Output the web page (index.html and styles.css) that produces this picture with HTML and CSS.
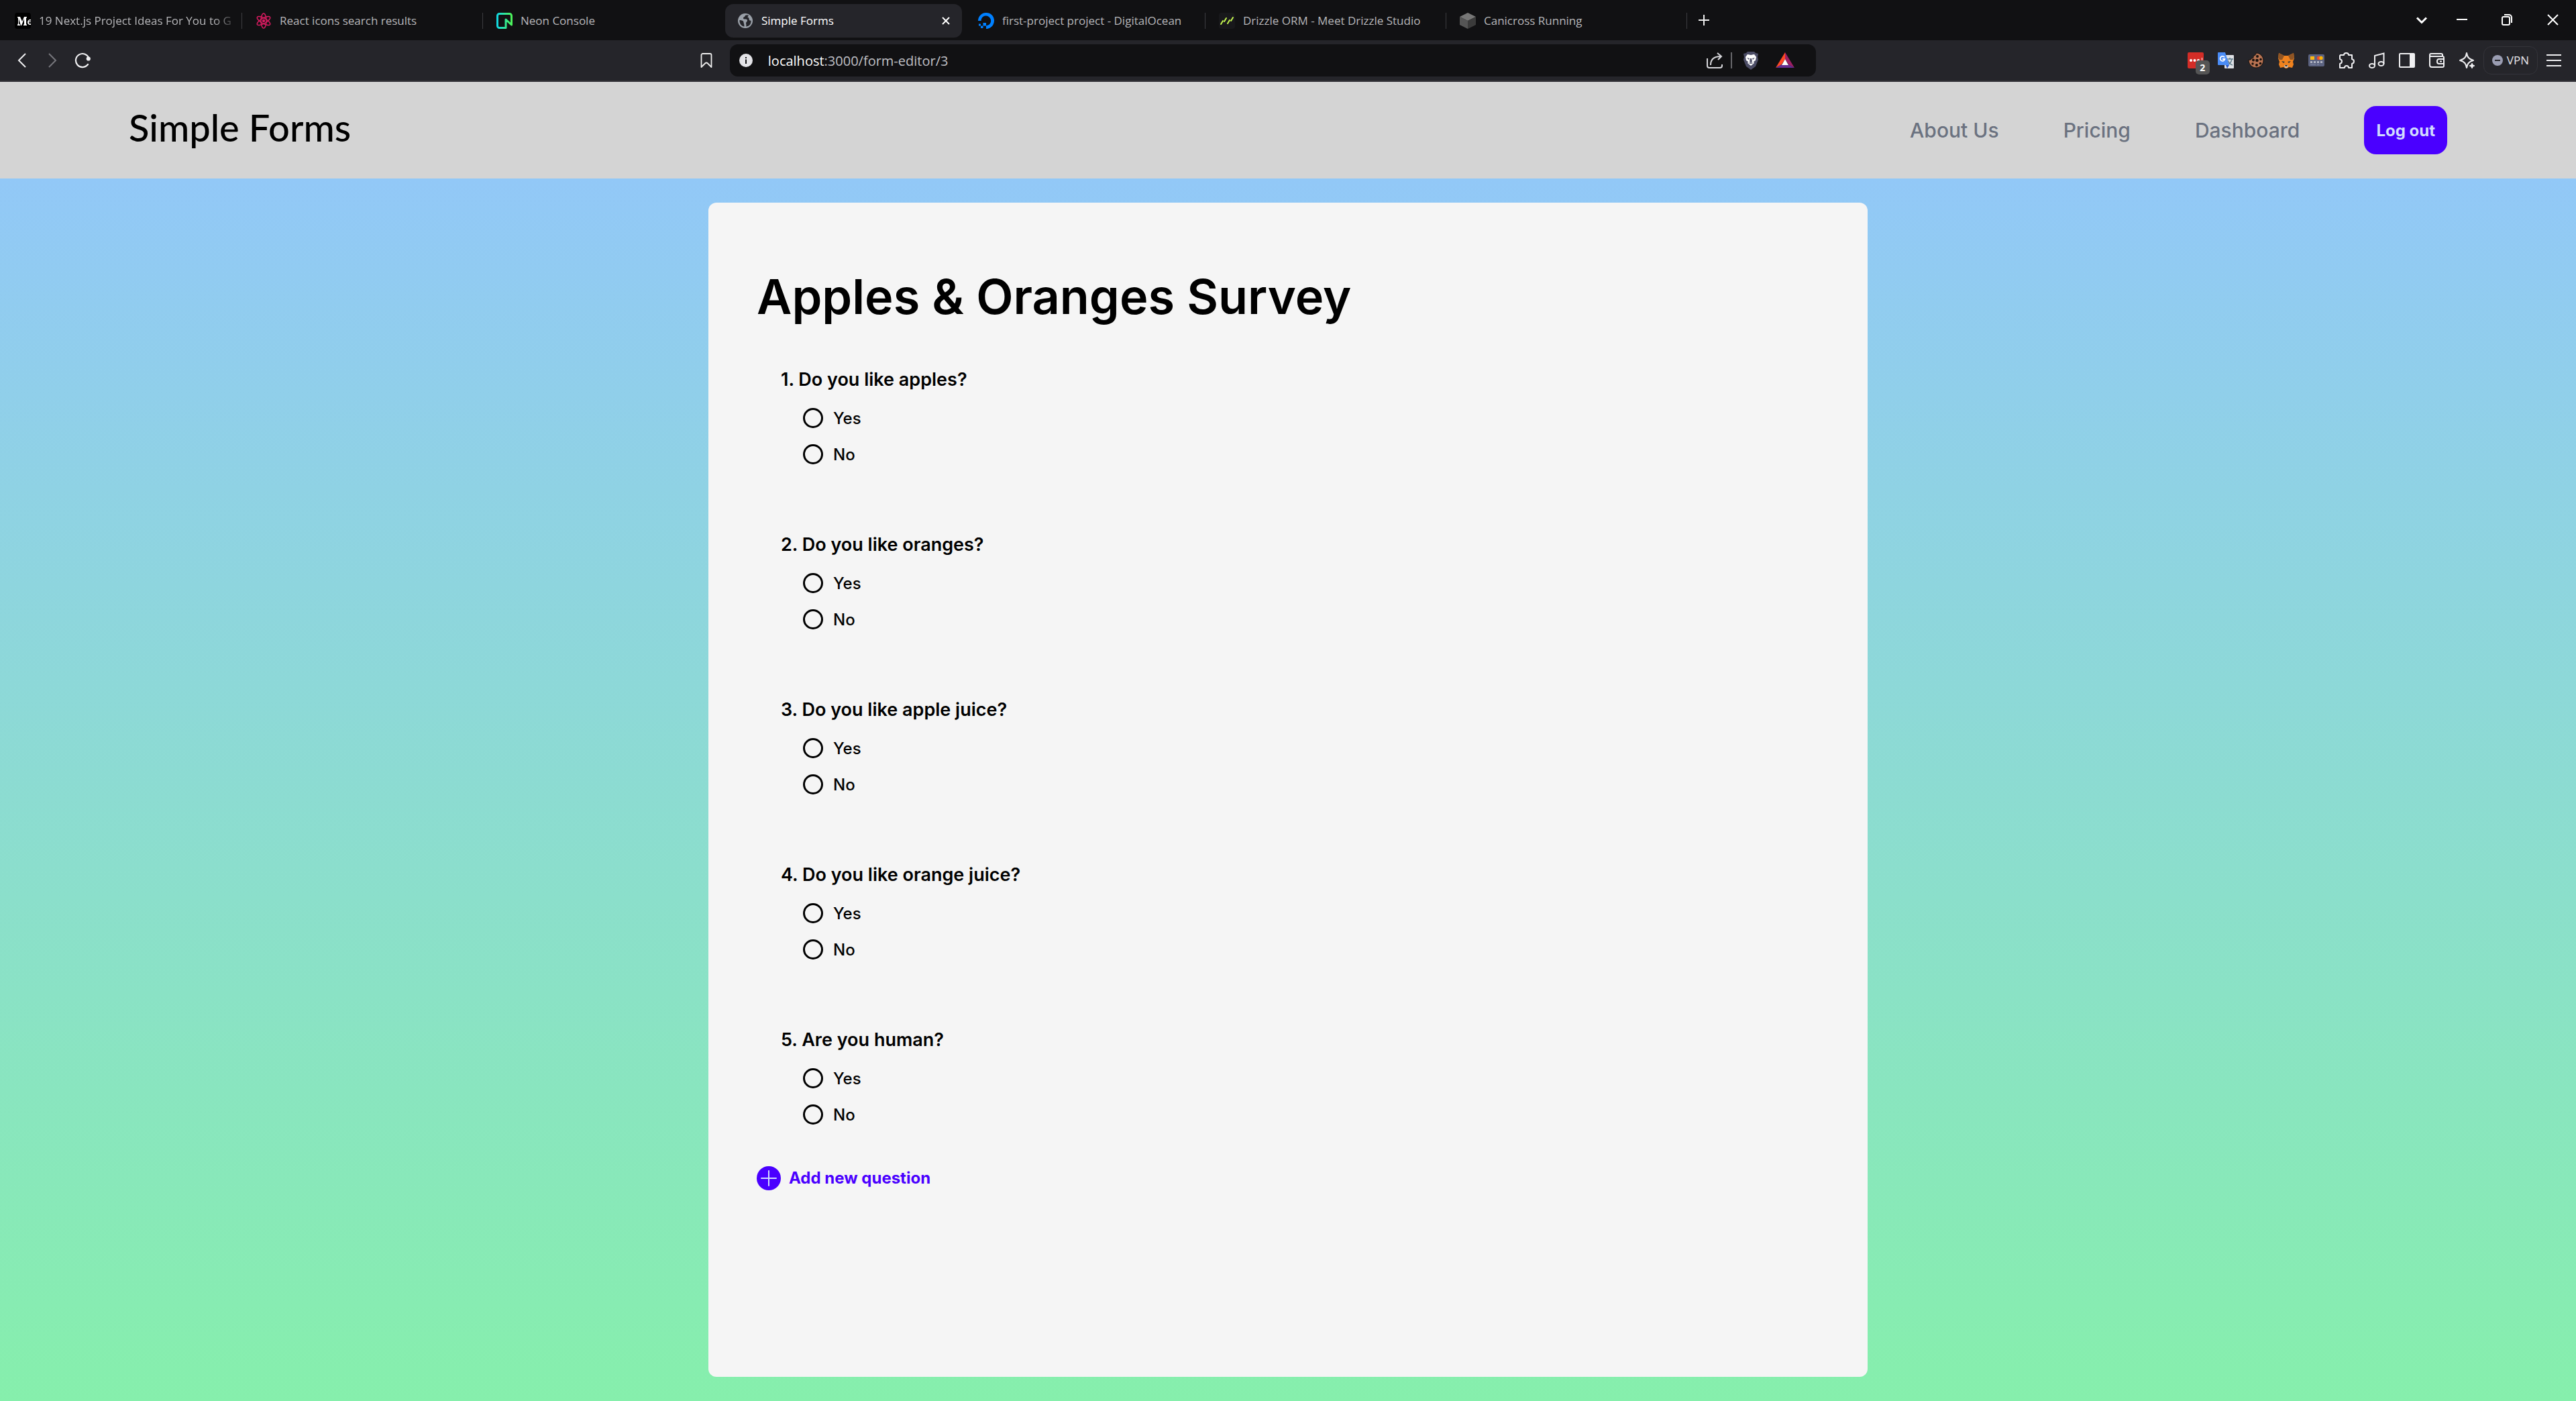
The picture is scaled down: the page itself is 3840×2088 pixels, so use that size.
FILE: index.html
```html
<!DOCTYPE html>
<html lang="en">
<head>
<meta charset="utf-8">
<meta name="viewport" content="width=device-width, initial-scale=1">
<title>Simple Forms</title>
<link rel="stylesheet" href="styles.css">
</head>
<body>
<div class="browser">
  <div class="tab-strip">
    <div class="tabs">
      <button class="tab tab-long">
        <svg class="icon" viewBox="0 0 24 24"><rect width="24" height="24" rx="4" fill="#000"/><path d="M4 6h4l3 7 3-7h4v1l-1 1v9l1 1v1h-5v-1l1-1V9l-4 10h-1L6 9v7l2 2v1H4v-1l1-2V8L4 7zM24 10c-6-1-7 9 0 8v-2c-2 1-3 0-3-2h3zm0 2v1h-3c0-1 2-2 3-1" fill="#fff"/></svg>
        <span class="tab-title">19 Next.js Project Ideas For You to G</span>
      </button>
      <button class="tab">
        <svg class="icon" viewBox="0 0 24 24" fill="none" stroke="#d81b60" stroke-width="1.500"><ellipse cx="12" cy="12" rx="4" ry="11"/><ellipse cx="12" cy="12" rx="4" ry="11" transform="rotate(60 12 12)"/><ellipse cx="12" cy="12" rx="4" ry="11" transform="rotate(120 12 12)"/><circle cx="12" cy="12" r="1.500" fill="#d81b60"/></svg>
        <span class="tab-title">React icons search results</span>
      </button>
      <button class="tab">
        <svg class="icon" viewBox="0 0 24 24" fill="none" stroke-width="3"><defs><linearGradient id="neon" x1="0" y1="0" x2="1" y2="0"><stop offset="0" stop-color="#12d8e0"/><stop offset="1" stop-color="#4df25a"/></linearGradient></defs><path d="M14 22.500H4.500a3 3 0 0 1-3-3v-15a3 3 0 0 1 3-3h15a3 3 0 0 1 3 3V18l-8.500-8z" stroke="url(#neon)" stroke-linejoin="round"/></svg>
        <span class="tab-title">Neon Console</span>
      </button>
      <button class="tab tab-active">
        <svg class="icon" viewBox="0 0 24 24"><circle cx="12" cy="12" r="11" fill="#9aa0a8"/><path d="M13 3.500c-2 1-1 2-3 3s-1 3 1 3 4 0 4 2-2 2-2 4 1 3 0 5c5 0 8-4 7.500-9-2 1-3-1-3-3s-2-1-2-2 2-2 1-3zM3.500 11c3 0 6 1 6 3s1 2 1 6.500C6 20 3 16 3.500 11z" fill="#25252a"/></svg>
        <span class="tab-title">Simple Forms</span>
        <svg class="close" viewBox="0 0 12 12" fill="none" stroke="#fff" stroke-width="2"><path d="M1 1l10 10M11 1L1 11"/></svg>
      </button>
      <button class="tab">
        <svg class="icon" viewBox="0 0 24 24" fill="#0080ff"><path d="M12 24v-4.700c5 0 8.500-5 6.600-10C16 3 7 3 5 9.300c-.3.800-.4 1.700-.4 2.700H0C0 4 7.500-2 16 .600 23 3 26 11 22.600 17.500 20.500 21.500 16.500 24 12 24z"/><path d="M7.500 15H12v4.500H7.500zM4 19.500h3.500V23H4zM1 16.500h3v3H1z"/></svg>
        <span class="tab-title">first-project project - DigitalOcean</span>
      </button>
      <button class="tab">
        <svg class="icon" viewBox="0 0 24 24" fill="none" stroke="#c5f74f" stroke-width="2" stroke-linecap="round"><rect width="24" height="24" rx="4" fill="#18181b" stroke="none"/><path d="M6 12l-3 5M11 8l-3 5M16 11l-3 5M21 7l-3 5"/></svg>
        <span class="tab-title">Drizzle ORM - Meet Drizzle Studio</span>
      </button>
      <button class="tab">
        <svg class="icon" viewBox="0 0 24 24"><path d="M12 0l12 6-12 6L0 6z" fill="#777"/><path d="M0 6l12 6v12L0 18z" fill="#555"/><path d="M24 6l-12 6v12l12-6z" fill="#3b3b3b"/></svg>
        <span class="tab-title">Canicross Running</span>
      </button>
    </div>
    <button class="icon-button" aria-label="New tab"><svg class="icon" viewBox="0 0 24 24" stroke="#eee" stroke-width="2"><path d="M12 3v16M4 11h16"/></svg></button>
    <div class="window-controls">
      <button class="icon-button search-tabs" aria-label="Search tabs"><svg class="icon" viewBox="0 0 24 24" fill="none" stroke="#fff" stroke-width="3"><path d="M5 7.500l7 7 7-7"/></svg></button>
      <button class="icon-button" aria-label="Minimize"><svg class="icon" viewBox="0 0 24 24" stroke="#fff" stroke-width="2"><path d="M4 10h16"/></svg></button>
      <button class="icon-button" aria-label="Restore"><svg class="icon" viewBox="0 0 24 24" fill="none" stroke="#fff" stroke-width="2"><rect x="4" y="6" width="11" height="12" rx="2"/><path d="M7 3h7a4 4 0 0 1 4 4v8"/></svg></button>
      <button class="icon-button" aria-label="Close"><svg class="icon" viewBox="0 0 24 24" stroke="#fff" stroke-width="2"><path d="M4 3l15 15M19 3L4 18"/></svg></button>
    </div>
  </div>
  <div class="toolbar">
    <div class="history">
      <button class="icon-button" aria-label="Back"><svg class="icon" viewBox="0 0 24 24" fill="none" stroke="#f0f0f2" stroke-width="2"><path d="M17 2L7 12l10 10"/></svg></button>
      <button class="icon-button" aria-label="Forward"><svg class="icon" viewBox="0 0 24 24" fill="none" stroke="#77777d" stroke-width="2"><path d="M7 2l10 10L7 22"/></svg></button>
      <button class="icon-button" aria-label="Reload"><svg class="icon" viewBox="0 0 24 24" fill="none" stroke="#f0f0f2" stroke-width="2.200" stroke-linecap="round"><path d="M20 18A10 10 0 1 1 21.500 9"/><circle cx="20.800" cy="9.500" r="2" fill="#f0f0f2"/></svg></button>
    </div>
    <div class="location">
      <button class="icon-button" aria-label="Bookmark"><svg class="icon" viewBox="0 0 24 24" fill="none" stroke="#eee" stroke-width="1.800"><path d="M4.500 22V4a2 2 0 0 1 2-2h11a2 2 0 0 1 2 2v18l-4-4-1.500-1.500q-2-2-4 0L8.500 18z" stroke-linejoin="round"/></svg></button>
      <div class="address-bar">
        <svg class="icon" viewBox="0 0 24 24"><circle cx="12" cy="12" r="10" fill="#e4e4e8"/><path d="M11 7h2v2h-2zM11 10.500h2V17h-2z" fill="#111113"/></svg>
        <a class="address" href="#survey"><span class="address-host">localhost</span>:3000/form-editor/3</a>
        <button class="icon-button" aria-label="Share"><svg class="icon" viewBox="0 0 24 24" fill="none" stroke="#d8d8dc" stroke-width="2"><path d="M1 9v11a3 3 0 0 0 3 3h16a3 3 0 0 0 3-3v-2M6 19C6 11 11 6 21 6M16 1l6 5-5 5"/></svg></button>
        <span class="divider"></span>
        <button class="icon-button" aria-label="Shields"><svg class="icon icon-tall" viewBox="0 0 24 27"><path d="M7 0h10l2 2 4 1-1 5 1 4-4 10-7 5-7-5L1 12l1-4-1-5 4-1z" fill="#4c4d66"/><path d="M7 4l5 1 5-1 3 4-1 5-3 2 1 2-5 4-5-4 1-2-3-2-1-5z" fill="#fff"/><path d="M6 9l4 1-1 2zM18 9l-4 1 1 2zM11 10h2l1 5-2 1-2-1zM8 17l4-1 4 1-4 1z" fill="#4c4d66"/></svg></button>
        <button class="icon-button rewards" aria-label="Rewards"><svg class="icon icon-wide" viewBox="0 0 28 24"><path d="M14 0L0 23l9-5 5-8z" fill="#ff4724"/><path d="M14 0l14 23-9-5-5-8z" fill="#9e1f63"/><path d="M0 23h28l-9-5H9z" fill="#662d91"/><path d="M14 10l5 9H9z" fill="#fff"/></svg></button>
      </div>
    </div>
    <div class="extensions">
      <button class="icon-button badge-host" aria-label="Password manager"><svg class="icon" viewBox="0 0 24 24"><rect width="24" height="24" rx="2" fill="#d32d27"/><path d="M21 8h1v6h-1z" fill="#fff"/><circle cx="5" cy="12" r="2" fill="#fff"/><circle cx="10.500" cy="12" r="2" fill="#fff"/><circle cx="16" cy="12" r="2" fill="#fff"/></svg><span class="badge">2</span></button>
      <button class="icon-button" aria-label="Translate"><svg class="icon" viewBox="0 0 24 24"><rect x="10" y="4" width="14" height="20" rx="1" fill="#dfe1e5"/><path d="M13 10h10M18 8v2M21 10c-1 5-4 8-7 9M15 12c1 3 4 6 7 7" fill="none" stroke="#607d8b" stroke-width="1.500"/><path d="M12 19h5l-3 5z" fill="#2a56c6"/><path d="M1 0h10l6 19H1a1 1 0 0 1-1-1V1a1 1 0 0 1 1-1z" fill="#4a8cf6"/><path d="M10 7.500A3.500 3.500 0 1 0 10.500 10H7" fill="none" stroke="#fff" stroke-width="1.800"/></svg></button>
      <button class="icon-button" aria-label="Cookies"><svg class="icon" viewBox="0 0 24 24"><path d="M12 1c6 0 11 5 11 11s-5 11-11 11S1 18 1 11c2 1 4 0 4-2 3 0 4-2 3-4 3 0 4-2 4-4z" fill="#b87352" stroke="#17110e"/><g fill="#17110e"><circle cx="14" cy="6" r="2"/><circle cx="8" cy="11.500" r="2"/><circle cx="13.500" cy="12" r="2.300"/><circle cx="19" cy="10.500" r="1.700"/><circle cx="7" cy="17" r="1.700"/><circle cx="13" cy="19" r="2"/><circle cx="18.500" cy="16.500" r="1.800"/></g></svg></button>
      <button class="icon-button" aria-label="Crypto wallet"><svg class="icon" viewBox="0 0 24 24"><path d="M1 1l8 4h6l8-4 1 8-2 5 1 4-2 5-5-1-3 2h-2l-3-2-5 1-2-5 1-4-2-5z" fill="#f0821e"/><path d="M1 1l8 4-3 6H2L0 8zM23 1l-8 4 3 6h4l2-3z" fill="#8f5524"/><path d="M5 13l5 1-2 2zM19 13l-5 1 2 2z" fill="#28353b"/><path d="M9 19h6l-1 4h-4z" fill="#d7c1b3"/><path d="M10 19h4l-1 2h-2z" fill="#28353b"/></svg></button>
      <button class="icon-button" aria-label="Payment card"><svg class="icon" viewBox="0 0 24 24"><rect y="3" width="24" height="18" rx="2" fill="#5c6380"/><rect x="3" y="6" width="6" height="5" fill="#fdb813"/><circle cx="15.500" cy="8.500" r="2.700" fill="#f44a2a"/><circle cx="19" cy="8.500" r="2.700" fill="#ffb300"/><path d="M3 14.500h18" stroke="#d5d8e0" stroke-width="2" stroke-dasharray="3 2"/><path d="M3 18h8M13 18h3" stroke="#838aa5"/></svg></button>
      <button class="icon-button" aria-label="Extensions"><svg class="icon" viewBox="0 0 24 24" fill="none" stroke="#f0f0f2" stroke-width="2" stroke-linejoin="round"><path d="M3 4h5c0-4 7-4 7 0h5v6c4 1 4 6 0 7v6h-5c0-4-6-4-6 0H2v-6c4-1 4-6 0-7V5z"/></svg></button>
      <button class="icon-button" aria-label="Playlist"><svg class="icon" viewBox="0 0 24 24" fill="none" stroke="#f0f0f2" stroke-width="2"><ellipse cx="5" cy="20" rx="4" ry="3"/><ellipse cx="18.500" cy="17" rx="4" ry="3"/><path d="M9 20V5l13.500-3.500V17"/></svg></button>
      <button class="icon-button" aria-label="Sidebar"><svg class="icon" viewBox="0 0 24 24"><rect x="1" y="2" width="22" height="20" rx="1" fill="none" stroke="#f0f0f2" stroke-width="2"/><path d="M16 2h7v20h-7z" fill="#f0f0f2"/></svg></button>
      <button class="icon-button" aria-label="Wallet"><svg class="icon" viewBox="0 0 24 24" fill="none" stroke="#f0f0f2" stroke-width="2"><path d="M20 6V4a2 2 0 0 0-2-2H3a2 2 0 0 0-2 2v15a3 3 0 0 0 3 3h16a2 2 0 0 0 2-2V8a2 2 0 0 0-2-2H3a2 2 0 0 1-2-2M22 10h-7a3 3 0 0 0-3 3v1a3 3 0 0 0 3 3h7M16 13.500h3"/></svg></button>
      <button class="icon-button" aria-label="Assistant"><svg class="icon" viewBox="0 0 24 24" fill="none" stroke="#f0f0f2" stroke-width="2" stroke-linejoin="round"><path d="M11 1c1 6 3 9 10 11-7 2-9 5-10 11-1-6-3-9-10-11C8 10 10 7 11 1z"/><path d="M19 17c0 2 1 3 3 3-2 0-3 1-3 3 0-2-1-3-3-3 2 0 3-1 3-3z" fill="#f0f0f2"/></svg></button>
      <button class="vpn"><svg class="vpn-icon" viewBox="0 0 16 16"><circle cx="8" cy="8" r="8" fill="#9a9db2"/><path d="M4 8h8" stroke="#25252a" stroke-width="2"/></svg>VPN</button>
      <button class="icon-button" aria-label="Menu"><svg class="icon" viewBox="0 0 24 24" stroke="#f0f0f2" stroke-width="2"><path d="M1 4h22M1 12h22M1 20h22"/></svg></button>
    </div>
  </div>
</div>

<div class="page">
  <header class="site-header">
    <a class="brand" href="#">Simple Forms</a>
    <nav class="site-nav">
      <a class="nav-link" href="#">About Us</a>
      <a class="nav-link" href="#">Pricing</a>
      <a class="nav-link" href="#">Dashboard</a>
      <button class="logout">Log out</button>
    </nav>
  </header>
  <main class="survey" id="survey">
    <h1 class="survey-title">Apples &amp; Oranges Survey</h1>
    <form class="questions">
      <fieldset class="question">
        <legend class="question-text">1. Do you like apples?</legend>
        <label class="option"><input class="radio" type="radio" name="q1">Yes</label>
        <label class="option"><input class="radio" type="radio" name="q1">No</label>
      </fieldset>
      <fieldset class="question">
        <legend class="question-text">2. Do you like oranges?</legend>
        <label class="option"><input class="radio" type="radio" name="q2">Yes</label>
        <label class="option"><input class="radio" type="radio" name="q2">No</label>
      </fieldset>
      <fieldset class="question">
        <legend class="question-text">3. Do you like apple juice?</legend>
        <label class="option"><input class="radio" type="radio" name="q3">Yes</label>
        <label class="option"><input class="radio" type="radio" name="q3">No</label>
      </fieldset>
      <fieldset class="question">
        <legend class="question-text">4. Do you like orange juice?</legend>
        <label class="option"><input class="radio" type="radio" name="q4">Yes</label>
        <label class="option"><input class="radio" type="radio" name="q4">No</label>
      </fieldset>
      <fieldset class="question">
        <legend class="question-text">5. Are you human?</legend>
        <label class="option"><input class="radio" type="radio" name="q5">Yes</label>
        <label class="option"><input class="radio" type="radio" name="q5">No</label>
      </fieldset>
    </form>
    <button class="add-question">
      <svg class="add-icon" viewBox="0 0 36 36"><circle cx="18" cy="18" r="18" fill="#4a00ff"/><path d="M18 7v22M7 18h22" stroke="#d1dbff" stroke-width="2" stroke-linecap="round"/></svg>
      Add new question
    </button>
  </main>
</div>
</body>
</html>
```
FILE: styles.css
```css
* {
  box-sizing: border-box;
}

body {
  margin: 0;
  min-height: 100vh;
  display: flex;
  flex-direction: column;
  font-family: Inter, "Liberation Sans", sans-serif;
  color: #000;
}

button {
  padding: 0;
  border: 0;
  background: none;
  color: inherit;
  font: inherit;
}

a {
  color: inherit;
  text-decoration: none;
}

svg {
  display: block;
  flex: none;
}

/* Browser frame */

.browser {
  font-family: "Open Sans", "Noto Sans", sans-serif;
  background: #25252a;
  border-bottom: 2px solid #323136;
}

.icon {
  width: 24px;
  height: 24px;
}

.icon-wide {
  width: 28px;
}

.icon-tall {
  height: 27px;
}

.icon-button {
  flex: none;
}

.tab-strip {
  height: 60px;
  display: flex;
  align-items: center;
  padding: 2px 22px 0 4px;
  background: #111113;
}

.tabs {
  display: flex;
  gap: 6px;
  margin-right: 17px;
}

.tab {
  position: relative;
  width: 353px;
  height: 50px;
  display: flex;
  align-items: center;
  gap: 12px;
  padding: 0 18px;
  border-radius: 12px;
  color: #b6b6b9;
  font-size: 17px;
  line-height: 24px;
  text-align: left;
}

.tab::after {
  content: "";
  position: absolute;
  right: -4px;
  top: 13px;
  width: 1px;
  height: 24px;
  background: #3c3c40;
}

.tab-active {
  background: #25252a;
  color: #fff;
}

.tab-active::after,
.tab:has(+ .tab-active)::after {
  display: none;
}

.tab-title {
  flex: 1;
  white-space: nowrap;
}

.tab-long {
  padding-right: 2px;
}

.tab-long .tab-title {
  mask-image: linear-gradient(to right, #000 88%, transparent);
}

.close {
  width: 12px;
  height: 12px;
}

.window-controls {
  display: flex;
  gap: 44px;
  margin-left: auto;
}

.search-tabs {
  margin-right: -8px;
}

.toolbar {
  height: 60px;
  display: grid;
  grid-template-columns: 27% 1fr 29.5%;
  align-items: center;
}

.history {
  display: flex;
  gap: 21px;
  padding-left: 21px;
}

.location {
  display: flex;
  align-items: center;
  gap: 23px;
  padding-left: 4px;
}

.address-bar {
  flex: 1;
  height: 48px;
  display: flex;
  align-items: center;
  padding: 0 32px 0 12px;
  border-radius: 12px;
  background: #111113;
}

.address {
  flex: 1;
  margin-left: 21px;
  padding-top: 2px;
  color: #c0c0c6;
  font-size: 20px;
  line-height: 28px;
}

.address-host {
  color: #fff;
}

.divider {
  width: 2px;
  height: 24px;
  margin: 0 16px 0 12px;
  background: #66666b;
}

.rewards {
  margin-left: 25px;
}

.extensions {
  display: flex;
  align-items: center;
  justify-content: flex-end;
  gap: 21px;
  padding-right: 21px;
}

.badge-host {
  position: relative;
}

.badge {
  position: absolute;
  left: 12px;
  top: 12px;
  width: 21px;
  height: 21px;
  border-radius: 5px;
  background: #555;
  color: #fff;
  font-size: 14px;
  font-weight: 700;
  line-height: 21px;
}

.vpn {
  height: 42px;
  display: flex;
  align-items: center;
  gap: 6px;
  margin: 0 -9px;
  padding: 0 12px;
  border: 1px solid #34343a;
  border-radius: 12px;
  color: #e6e6ea;
  font-size: 17px;
  line-height: 24px;
}

.vpn-icon {
  width: 16px;
  height: 16px;
}

/* Page */

.page {
  flex: 1;
  display: flex;
  flex-direction: column;
  background: linear-gradient(#93c5fd, #86efac);
}

.site-header {
  display: flex;
  align-items: center;
  justify-content: space-between;
  padding: 36px 5%;
  background: #d4d4d4;
}

.brand {
  padding-bottom: 8px;
  font-family: Lato, sans-serif;
  font-size: 56px;
  font-weight: 500;
  line-height: 64px;
}

.site-nav {
  display: flex;
  align-items: center;
  gap: 96px;
}

.nav-link {
  color: #6b7280;
  font-size: 30px;
  font-weight: 500;
  line-height: 36px;
}

.logout {
  height: 72px;
  padding: 0 18px;
  border-radius: 18px;
  background: #4a00ff;
  color: #d1dbff;
  font-size: 24px;
  font-weight: 700;
}

.survey {
  flex: 1;
  width: 45%;
  margin: 36px auto;
  padding: 104px 72px 72px;
  border-radius: 12px;
  background: #f5f5f5;
}

.survey-title {
  margin: 0 0 68px;
  font-size: 72px;
  font-weight: 600;
  line-height: 72px;
}

.questions {
  display: flex;
  flex-direction: column;
  gap: 88px;
  padding-left: 36px;
}

.question {
  min-width: 0;
  margin: 0;
  padding: 0;
  border: 0;
}

.question-text {
  margin-bottom: 10px;
  padding: 0;
  font-size: 27px;
  font-weight: 600;
  line-height: 40px;
}

.option {
  height: 54px;
  display: flex;
  align-items: center;
  gap: 15px;
  padding-left: 33px;
  font-size: 24px;
  font-weight: 500;
}

.radio {
  appearance: none;
  width: 30px;
  height: 30px;
  margin: 0;
  border: 3px solid #000;
  border-radius: 50%;
}

.radio:checked {
  background: radial-gradient(#000 45%, transparent 50%);
}

.add-question {
  display: flex;
  align-items: center;
  gap: 12px;
  margin-top: 50px;
  color: #4a00ff;
  font-size: 24px;
  font-weight: 700;
  line-height: 36px;
}

.add-icon {
  width: 36px;
  height: 36px;
}
```
